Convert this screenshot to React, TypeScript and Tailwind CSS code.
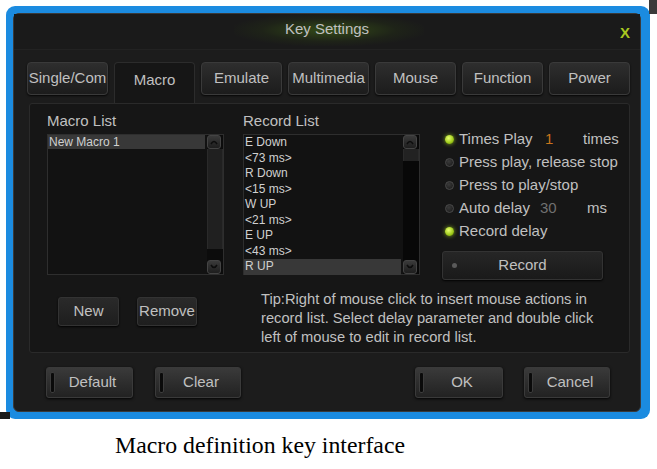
import React from "react";

const font = { fontFamily: '"Liberation Sans", Arial, sans-serif' };

function Tab({ label, active }: { label: string; active?: boolean }) {
  if (active) {
    return (
      <div className="w-[81px] h-[41px] rounded-t-[4px] border border-b-0 border-[#2c2c2c] bg-[#161616] flex items-start justify-center pt-[6px] text-[15px] text-[#c0c0c0]">
        {label}
      </div>
    );
  }
  return (
    <div className="w-[81px] h-[33px] rounded-[4px] border border-[#3a3a3a] bg-gradient-to-b from-[#2e2e2e] to-[#1c1c1c] shadow-[0_1px_2px_rgba(0,0,0,0.8)] flex items-center justify-center text-[15px] text-[#c0c0c0] whitespace-nowrap">
      {label}
    </div>
  );
}

function ArrowBtn({ up }: { up?: boolean }) {
  return (
    <div className="w-[14px] h-[14px] rounded-[3px] bg-gradient-to-b from-[#3a3a3a] to-[#1e1e1e] border border-[#444] flex items-center justify-center">
      <svg width="8" height="6" viewBox="0 0 8 6">
        {up ? (
          <path d="M1 5 Q4 0 7 5" fill="none" stroke="#0c0c0c" strokeWidth="1.5" />
        ) : (
          <path d="M1 1 Q4 6 7 1" fill="none" stroke="#0c0c0c" strokeWidth="1.5" />
        )}
      </svg>
    </div>
  );
}

function Radio({ on }: { on?: boolean }) {
  return on ? (
    <div className="w-[9px] h-[9px] rounded-full bg-[radial-gradient(circle_at_40%_35%,#e8ff70,#9cc818_60%,#5a7a08)] shadow-[0_0_4px_rgba(160,210,30,0.8)]" />
  ) : (
    <div className="w-[9px] h-[9px] rounded-full bg-[radial-gradient(circle_at_40%_35%,#3a3a3a,#222_70%)] border border-[#4a4a4a]" />
  );
}

function SmallBtn({ label, w }: { label: string; w: string }) {
  return (
    <div
      className={`${w} h-[29px] rounded-[3px] border border-[#333] bg-gradient-to-b from-[#2a2a2a] to-[#1e1e1e] shadow-[0_1px_2px_rgba(0,0,0,0.9)] flex items-center justify-center text-[15px] text-[#c0c0c0]`}
    >
      {label}
    </div>
  );
}

function BigBtn({ label, w }: { label: string; w: string }) {
  return (
    <div
      className={`${w} h-[31px] rounded-[3px] border border-[#3a3a3a] bg-gradient-to-b from-[#3a3a3a] to-[#222] shadow-[0_1px_3px_rgba(0,0,0,0.9)] flex items-center relative`}
    >
      <div className="absolute left-[3px] top-[4px] bottom-[4px] w-[5px] rounded-[2px] bg-[#0a0a0a] border border-[#3c3c3c]" />
      <div className="flex-1 text-center text-[15px] text-[#c0c0c0] pl-[6px]">{label}</div>
    </div>
  );
}

const records = ["E Down", "<73 ms>", "R Down", "<15 ms>", "W UP", "<21 ms>", "E UP", "<43 ms>", "R UP"];

export default function App() {
  return (
    <div className="w-[657px] h-[469px] bg-white relative overflow-hidden" style={font}>
      <div className="absolute right-0 top-0 w-[8px] h-[14px] bg-[#3a3a3a]" />
      <div className="absolute left-0 top-[412px] w-[10px] h-[7px] bg-[#1a1a1a]" />
      <div className="ml-[6px] mt-[6px] w-[644px] h-[413px] rounded-[9px] bg-[#1b8be0] pt-[7px] pl-[7px] pr-[9px] pb-[7px]">
        <div className="w-full h-full rounded-[6px] border border-[#3a3a3a] bg-[#1c1c1c] flex flex-col">
          {/* title */}
          <div className="h-[36px] relative flex items-center justify-center border-b border-[#222] bg-[#1a1a1a]">
            <div className="absolute left-[220px] top-[0px] w-[190px] h-[32px] bg-[radial-gradient(ellipse_at_center,rgba(90,150,20,0.4),rgba(60,100,10,0.12)_50%,rgba(0,0,0,0)_75%)]" />
            <div className="relative text-[15px] text-[#c0c0c0] -mt-[4px]">Key Settings</div>
            <div className="absolute right-[10px] top-[8px] text-[15px] font-bold text-[#a8c820]">X</div>
          </div>
          {/* tabs */}
          <div className="flex items-start gap-[6px] pl-[13px] mt-[12px] h-[41px]">
            <Tab label="Single/Com" />
            <Tab label="Macro" active />
            <Tab label="Emulate" />
            <Tab label="Multimedia" />
            <Tab label="Mouse" />
            <Tab label="Function" />
            <Tab label="Power" />
          </div>
          {/* panel */}
          <div className="ml-[15px] w-[601px] h-[250px] border border-[#2a2a2a] rounded-[3px] bg-[#161616] flex flex-col">
            <div className="flex pt-[8px] pl-[17px]">
              {/* macro list */}
              <div className="w-[177px] flex flex-col">
                <div className="h-[22px] leading-[18px] text-[15px] text-[#c0c0c0]">Macro List</div>
                <div className="h-[141px] flex border border-[#2e2e2e] bg-[#121212]">
                  <div className="flex-1">
                    <div className="h-[14px] leading-[14px] bg-[#383838] text-[12px] text-[#d0d0d0] pl-[1px]">New Macro 1</div>
                  </div>
                  <div className="w-[16px] ml-[2px] flex flex-col bg-[#0c0c0c]">
                    <ArrowBtn up />
                    <div className="h-[100px] bg-[#202020] border-x border-[#2a2a2a]" />
                    <div className="flex-1" />
                    <ArrowBtn />
                  </div>
                </div>
              </div>
              {/* record list */}
              <div className="w-[177px] ml-[19px] flex flex-col">
                <div className="h-[22px] leading-[18px] text-[15px] text-[#c0c0c0]">Record List</div>
                <div className="h-[141px] flex border border-[#2e2e2e] bg-[#121212]">
                  <div className="flex-1 flex flex-col">
                    {records.map((r, i) => (
                      <div
                        key={i}
                        className={`h-[15.5px] leading-[15.5px] text-[12px] text-[#d0d0d0] pl-[1px] ${i === records.length - 1 ? "bg-[#383838]" : ""}`}
                      >
                        {r}
                      </div>
                    ))}
                  </div>
                  <div className="w-[16px] ml-[2px] flex flex-col bg-[#080808]">
                    <ArrowBtn up />
                    <div className="h-[12px] bg-[#222] border-x border-[#2a2a2a]" />
                    <div className="flex-1" />
                    <ArrowBtn />
                  </div>
                </div>
              </div>
              {/* options */}
              <div className="ml-[25px] flex flex-col pt-[16px]">
                <div className="h-[23px] flex items-center text-[15px] text-[#c0c0c0] whitespace-nowrap">
                  <Radio on />
                  <span className="ml-[5px] w-[86px]">Times Play</span>
                  <span className="text-[#c8741c] w-[38px]">1</span>
                  <span>times</span>
                </div>
                <div className="h-[23px] flex items-center text-[15px] text-[#c0c0c0] whitespace-nowrap">
                  <Radio />
                  <span className="ml-[5px]">Press play, release stop</span>
                </div>
                <div className="h-[23px] flex items-center text-[15px] text-[#c0c0c0] whitespace-nowrap">
                  <Radio />
                  <span className="ml-[5px]">Press to play/stop</span>
                </div>
                <div className="h-[23px] flex items-center text-[15px] text-[#c0c0c0] whitespace-nowrap">
                  <Radio />
                  <span className="ml-[5px] w-[81px]">Auto delay</span>
                  <span className="text-[#707070] w-[47px]">30</span>
                  <span>ms</span>
                </div>
                <div className="h-[23px] flex items-center text-[15px] text-[#c0c0c0] whitespace-nowrap">
                  <Radio on />
                  <span className="ml-[5px]">Record delay</span>
                </div>
                <div className="mt-[8px] -ml-[3px] w-[161px] h-[29px] rounded-[3px] border border-[#333] bg-gradient-to-b from-[#262626] to-[#1a1a1a] shadow-[0_1px_2px_rgba(0,0,0,0.9)] flex items-center relative">
                  <div className="absolute left-[9px] top-[11px] w-[5px] h-[5px] rounded-full bg-[#5a5a5a]" />
                  <div className="flex-1 text-center text-[15px] text-[#c0c0c0]">Record</div>
                </div>
              </div>
            </div>
            {/* bottom row */}
            <div className="flex mt-[10px]">
              <div className="flex pl-[28px] pt-[7px] gap-[18px]">
                <SmallBtn label="New" w="w-[61px]" />
                <SmallBtn label="Remove" w="w-[60px]" />
              </div>
              <div className="ml-[64px] text-[14.7px] leading-[19px] text-[#c0c0c0] whitespace-nowrap">
                Tip:Right of mouse click to insert mouse actions in
                <br />
                record list. Select delay parameter and double click
                <br />
                left of mouse to edit in record list.
              </div>
            </div>
          </div>
          {/* bottom buttons */}
          <div className="flex mt-[14px] pl-[32px]">
            <BigBtn label="Default" w="w-[87px]" />
            <div className="ml-[22px]">
              <BigBtn label="Clear" w="w-[86px]" />
            </div>
            <div className="ml-[174px]">
              <BigBtn label="OK" w="w-[88px]" />
            </div>
            <div className="ml-[21px]">
              <BigBtn label="Cancel" w="w-[86px]" />
            </div>
          </div>
        </div>
      </div>
      <div className="pl-[115px] mt-[13px] text-[23.8px] leading-[26px] text-black" style={{ fontFamily: '"Liberation Serif", "Times New Roman", serif' }}>
        Macro definition key interface
      </div>
    </div>
  );
}
